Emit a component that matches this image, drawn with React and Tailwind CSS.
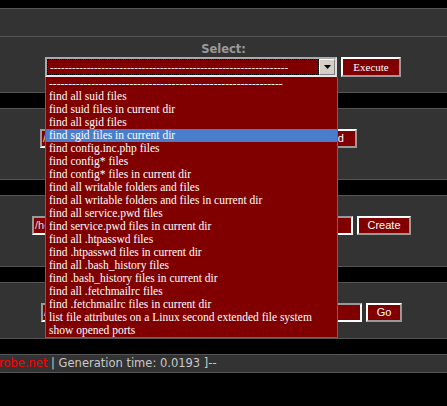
import React from 'react'

const dashes = '-----------------------------------------------------------------'

const options = [
  '-------------------------------------------------------------',
  'find all suid files',
  'find suid files in current dir',
  'find all sgid files',
  'find sgid files in current dir',
  'find config.inc.php files',
  'find config* files',
  'find config* files in current dir',
  'find all writable folders and files',
  'find all writable folders and files in current dir',
  'find all service.pwd files',
  'find service.pwd files in current dir',
  'find all .htpasswd files',
  'find .htpasswd files in current dir',
  'find all .bash_history files',
  'find .bash_history files in current dir',
  'find all .fetchmailrc files',
  'find .fetchmailrc files in current dir',
  'list file attributes on a Linux second extended file system',
  'show opened ports',
]

const serif = "font-['Liberation_Serif',serif]"
const sans = "font-['Liberation_Sans',Arial,sans-serif]"

const Button = ({ children, className = '' }) => (
  <div
    className={`h-[19px] flex items-center bg-[#800000] text-white text-[11px] border-2 border-t-white border-l-white border-r-[#999] border-b-[#999] ${sans} ${className}`}
  >
    {children}
  </div>
)

const Input = ({ value, className = '' }) => (
  <div
    className={`h-[19px] flex items-center overflow-hidden whitespace-nowrap bg-[#800000] text-[#ddd] text-[11px] pl-[1px] border-2 border-t-[#999] border-l-[#999] border-r-white border-b-white ${sans} ${className}`}
  >
    {value}
  </div>
)

const Label = ({ children }) => (
  <div className="h-[20px] pt-[6px] text-center text-[11.5px] leading-[13px] font-bold text-[#9a9a9a] font-['DejaVu_Sans',Verdana,sans-serif]">
    {children}
  </div>
)

export default function App() {
  return (
    <div className="relative w-[447px] h-[406px] overflow-hidden bg-black pt-[8px]">
      {/* top empty row */}
      <div className="h-[29px] border-y border-[#555] bg-[#333]" />

      {/* select row */}
      <div className="h-[56px] border-b border-[#555] bg-[#333]">
        <Label>Select:</Label>
        <div className="flex gap-[4px] pl-[45px]">
          <div className="w-[292px] h-[20px] flex bg-[#800000] border-2 border-t-[#aaa] border-l-[#aaa] border-r-[#ddd] border-b-[#e8e8e8]">
            <div className={`flex-1 m-[1px] outline-1 outline-dotted outline-black text-white text-[11px] leading-[14px] pl-[2px] overflow-hidden whitespace-nowrap ${serif}`}>
              {dashes}
            </div>
            <div className="w-[16px] bg-[#d4d0c8] border border-t-white border-l-white border-r-[#808080] border-b-[#808080] flex items-center justify-center">
              <svg width="7" height="4" viewBox="0 0 7 4">
                <path d="M0 0h7L3.5 4z" fill="#000" />
              </svg>
            </div>
          </div>
          <div className={`w-[60px] h-[20px] flex items-center justify-center bg-[#800000] text-white text-[11px] border-2 border-t-white border-l-white border-r-[#999] border-b-[#999] ${serif}`}>
            Execute
          </div>
        </div>
      </div>

      {/* find row */}
      <div className="mt-[15px] h-[72px] border-y border-[#555] bg-[#333]">
        <Label>Find text in files:</Label>
        <div className="flex gap-[4px] pl-[40px]">
          <Input value="/home/" className="w-[271px]" />
          <Button className="w-[42px] justify-end pr-[11px]">Find</Button>
        </div>
      </div>

      {/* make dir row */}
      <div className="mt-[15px] h-[72px] border-y border-[#555] bg-[#333]">
        <Label>Make Dir:</Label>
        <div className="flex gap-[4px] pl-[32px]">
          <Input value="/home/user/public_html/" className="w-[321px]" />
          <Button className="w-[54px] justify-center">Create</Button>
        </div>
      </div>

      {/* go dir row */}
      <div className="mt-[15px] h-[57px] border-y border-[#555] bg-[#333]">
        <Label>Go Dir:</Label>
        <div className="flex gap-[4px] pl-[41px]">
          <Input value="/home/user/public_html/" className="w-[321px]" />
          <Button className="w-[36px] justify-center">Go</Button>
        </div>
      </div>

      {/* footer */}
      <div className="mt-[15px] h-[19px] border-y border-[#555] bg-[#333] whitespace-nowrap text-[11.5px] leading-[17px] text-[#c8c8c8] font-['DejaVu_Sans',Verdana,sans-serif]">
        <span className="ml-[-1px] text-[#f00]">robe.net</span> | Generation time: 0.0193 ]--
      </div>

      {/* open dropdown list */}
      <div className={`absolute left-[45px] top-[77px] w-[293px] bg-[#800000] border-x border-b border-[#666] ${serif}`}>
        {options.map((o, i) => (
          <div
            key={i}
            className={`h-[13px] leading-[13px] pl-[3px] text-[11.5px] text-white whitespace-nowrap ${i === 4 ? 'bg-[#4a7dcc]' : ''}`}
          >
            {o}
          </div>
        ))}
      </div>
    </div>
  )
}
